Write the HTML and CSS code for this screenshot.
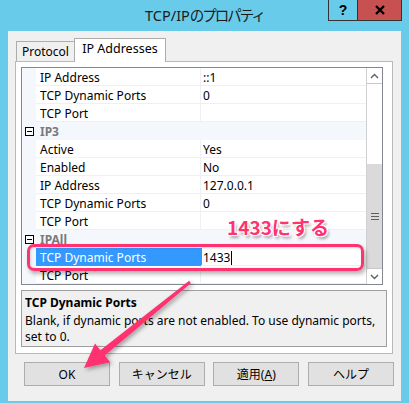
FILE: index.html
```html
<!DOCTYPE html>
<html lang="ja">
<head>
<meta charset="utf-8">
<link rel="stylesheet" href="styles.css">
</head>
<body>
<div class="window">
  <div class="titlebar">
    <div class="title">TCP/IP<span class="jp">のプロパティ</span></div>
    <div class="caption">
      <div class="cb help">?</div>
      <div class="cb close"><svg width="12" height="10" viewBox="0 0 12 10"><path d="M2 1 L10 9 M10 1 L2 9" stroke="#000" stroke-width="2.4" fill="none"/></svg></div>
    </div>
  </div>
  <div class="client">
    <div class="tabs">
      <div class="tab">Protocol</div>
      <div class="tab active">IP Addresses</div>
    </div>
    <div class="panel">
      <div class="pgrid">
        <div class="rows">
          <div class="row"><div class="m"></div><div class="n">IP Address</div><div class="v">::1</div></div>
          <div class="row"><div class="m"></div><div class="n">TCP Dynamic Ports</div><div class="v">0</div></div>
          <div class="row"><div class="m"></div><div class="n">TCP Port</div><div class="v"></div></div>
          <div class="row cat"><div class="m"><span class="minus"></span></div><div class="n">IP3</div><div class="v"></div></div>
          <div class="row"><div class="m"></div><div class="n">Active</div><div class="v">Yes</div></div>
          <div class="row"><div class="m"></div><div class="n">Enabled</div><div class="v">No</div></div>
          <div class="row"><div class="m"></div><div class="n">IP Address</div><div class="v">127.0.0.1</div></div>
          <div class="row"><div class="m"></div><div class="n">TCP Dynamic Ports</div><div class="v">0</div></div>
          <div class="row"><div class="m"></div><div class="n">TCP Port</div><div class="v"></div></div>
          <div class="row cat"><div class="m"><span class="minus"></span></div><div class="n">IPAll</div><div class="v"></div></div>
          <div class="row sel"><div class="m"></div><div class="n">TCP Dynamic Ports</div><div class="v">1433<span class="caret"></span></div></div>
          <div class="row"><div class="m"></div><div class="n">TCP Port</div><div class="v"></div></div>
        </div>
        <div class="sb">
          <div class="sb-btn up"><svg width="9" height="6" viewBox="0 0 9 6"><path d="M1 5 L4.5 1.5 L8 5" stroke="#606060" stroke-width="1.4" fill="none"/></svg></div>
          <div class="sb-track">
            <div class="sb-space"></div>
            <div class="sb-thumb"><svg width="8" height="7" viewBox="0 0 8 7"><path d="M0 0.5 H8 M0 3.5 H8 M0 6.5 H8" stroke="#606060" stroke-width="1" fill="none"/></svg></div>
          </div>
          <div class="sb-btn down"><svg width="9" height="6" viewBox="0 0 9 6"><path d="M1 1 L4.5 4.5 L8 1" stroke="#606060" stroke-width="1.4" fill="none"/></svg></div>
        </div>
      </div>
      <div class="desc">
        <div class="desc-title">TCP Dynamic Ports</div>
        <div class="desc-text">Blank, if dynamic ports are not enabled. To use dynamic ports,<br>set to 0.</div>
      </div>
    </div>
    <div class="buttons">
      <div class="btn">OK</div>
      <div class="btn">キャンセル</div>
      <div class="btn">適用(<u>A</u>)</div>
      <div class="btn">ヘルプ</div>
    </div>
  </div>

  <div class="hl"></div>
  <div class="label">1433にする</div>
  <svg class="arrow" width="409" height="403" viewBox="0 0 409 403">
    <defs>
      <filter id="sh" x="-20%" y="-20%" width="140%" height="140%">
        <feDropShadow dx="2" dy="2" stdDeviation="2" flood-color="#000" flood-opacity="0.35"/>
      </filter>
    </defs>
    <polygon points="189.1,280.8 190.9,283.2 104.8,355.6 110.2,362.2 84,368 95,343.6 100.4,350.2" fill="#fe3370" filter="url(#sh)"/>
  </svg>
</div>
</body>
</html>
```
FILE: styles.css
```css
html, body {
  margin: 0;
  padding: 0;
}
body {
  width: 409px;
  height: 403px;
  overflow: hidden;
  font-family: "Noto Sans", "Noto Sans CJK JP", sans-serif;
  font-size: 12px;
  color: #000;
}
.window {
  position: relative;
  width: 409px;
  height: 403px;
  background: #67cbe9;
  display: flex;
  flex-direction: column;
}
.titlebar {
  position: relative;
  height: 31px;
  flex: none;
}
.title {
  text-align: center;
  font-size: 14.5px;
  line-height: 30px;
  color: #1b1b1b;
  font-family: "Noto Sans", "Noto Sans CJK JP", sans-serif;
}
.title .jp {
  letter-spacing: -2px;
}
.caption {
  position: absolute;
  top: 0;
  right: 7px;
  display: flex;
}
.cb {
  height: 20px;
  border-bottom: 1px solid #333;
  border-left: 1px solid #333;
  display: flex;
  align-items: center;
  justify-content: center;
}
.help {
  width: 28px;
  font-weight: bold;
  font-size: 14px;
  font-family: "Liberation Sans", sans-serif;
}
.close {
  width: 43px;
  border-right: 1px solid #333;
  background: #c75050;
}
.client {
  margin: 0 8px;
  height: 370px;
  background: #f0f0f0;
  padding: 7px 0 0 7px;
  box-sizing: border-box;
  flex: none;
}
.tabs {
  display: flex;
  align-items: flex-end;
  height: 23px;
  padding-left: 1px;
}
.tab {
  height: 20px;
  box-sizing: border-box;
  border: 1px solid #acacac;
  border-bottom: none;
  background: #f0f0f0;
  width: 59px;
  text-align: center;
  line-height: 19px;
  font-size: 12px;
}
.tab.active {
  position: relative;
  z-index: 1;
  width: 92px;
  height: 24px;
  margin-left: -1px;
  margin-bottom: -1px;
  background: #fff;
  line-height: 20px;
  font-size: 12.5px;
}
.panel {
  width: 378px;
  height: 293px;
  box-sizing: border-box;
  border: 1px solid #b9b9b9;
  background: #fff;
  padding: 5px;
}
.pgrid {
  width: 362px;
  height: 218px;
  box-sizing: border-box;
  border: 1px solid #828790;
  display: flex;
  background: #fff;
}
.rows {
  width: 344px;
}
.row {
  display: grid;
  grid-template-columns: 14px 165px 165px;
  height: 18px;
}
.row > div {
  box-sizing: border-box;
  line-height: 19px;
  white-space: nowrap;
  overflow: hidden;
}
.m {
  background: #f4f7fc;
  position: relative;
}
.n {
  border-bottom: 1px solid #eef0f4;
  border-right: 1px solid #eef0f4;
  padding-left: 4px;
}
.v {
  border-bottom: 1px solid #eef0f4;
  padding-left: 2px;
}
.cat .n, .cat .v {
  background: #f4f7fc;
  border-color: #f4f7fc;
}
.cat .n {
  font-weight: bold;
  color: #7a7a7a;
}
.minus {
  position: absolute;
  left: 3px;
  top: 5px;
  width: 9px;
  height: 9px;
  box-sizing: border-box;
  border: 1px solid #000;
  background: #fff;
}
.minus::after {
  content: "";
  position: absolute;
  left: 1px;
  top: 3px;
  width: 5px;
  height: 1px;
  background: #000;
}
.sel .n {
  background: #3399ff;
  color: #fff;
  border-color: #3399ff;
}
.sel .v {
  box-shadow: inset 1px 0 0 #3399ff;
  padding-left: 2px;
}
.caret {
  display: inline-block;
  width: 1px;
  height: 14px;
  background: #000;
  vertical-align: -3px;
  margin-left: 1px;
}
.sb {
  width: 16px;
  box-sizing: border-box;
  border-left: 1px solid #d0d0d0;
  background: #fff;
  display: flex;
  flex-direction: column;
}
.sb-btn {
  height: 16px;
  box-sizing: border-box;
  display: flex;
  align-items: center;
  justify-content: center;
  flex: none;
}
.sb-btn.up {
  border-bottom: 1px solid #c8c8c8;
}
.sb-btn.down {
  border-top: 1px solid #c8c8c8;
}
.sb-track {
  flex: 1;
  display: flex;
  flex-direction: column;
}
.sb-space {
  height: 80px;
}
.sb-thumb {
  flex: 1;
  background: #dadada;
  display: flex;
  align-items: center;
  justify-content: center;
}
.desc {
  margin-top: 5px;
  height: 57px;
  box-sizing: border-box;
  border: 1px solid #a0a0a0;
  background: #f0f0f0;
  padding: 4px 3px 0 3px;
  line-height: 16px;
  white-space: nowrap;
}
.desc-title {
  font-weight: bold;
  margin-bottom: 2px;
}
.buttons {
  display: flex;
  justify-content: space-between;
  width: 370px;
  margin: 8px 0 0 9px;
}
.btn {
  width: 86px;
  height: 24px;
  box-sizing: border-box;
  border: 1px solid #adadad;
  background: #e1e1e1;
  display: flex;
  align-items: center;
  justify-content: center;
  font-size: 12px;
}
.hl {
  position: absolute;
  left: 27px;
  top: 244px;
  width: 337px;
  height: 27px;
  box-sizing: border-box;
  border: 3px solid #fe3370;
  border-radius: 7px;
  box-shadow: 2px 3px 4px rgba(0, 0, 0, 0.3), inset 1px 1px 3px rgba(0, 0, 0, 0.15);
}
.label {
  position: absolute;
  left: 227px;
  top: 213px;
  font-family: "Noto Sans CJK JP", sans-serif;
  font-weight: bold;
  font-size: 19px;
  line-height: 28px;
  color: #fe3370;
  text-shadow: -1px -1px 0 #fff, 1px -1px 0 #fff, -1px 1px 0 #fff, 1px 1px 0 #fff, 2px 3px 3px rgba(0, 0, 0, 0.35);
}
.arrow {
  position: absolute;
  left: 0;
  top: 0;
  pointer-events: none;
}
```
